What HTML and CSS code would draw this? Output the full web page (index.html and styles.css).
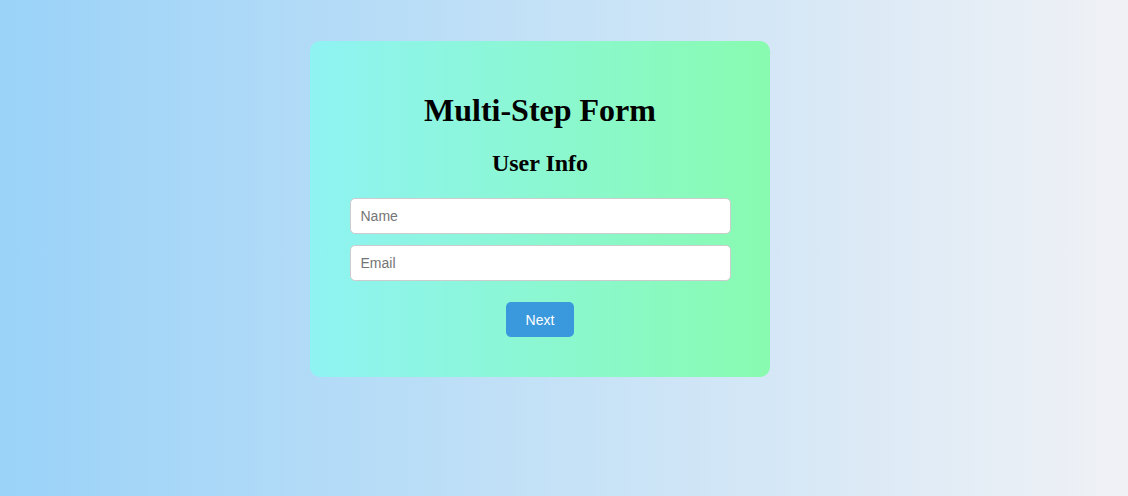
FILE: index.html
```html
<!DOCTYPE html>
<html lang="en">
<head>
<meta charset="utf-8">
<title>Multi-Step Form</title>
<link rel="stylesheet" href="styles.css">
</head>
<body>
  <div class="page">
    <div class="card">
      <h1 class="title">Multi-Step Form</h1>
      <div class="step">
        <h2 class="step-title">User Info</h2>
        <div class="fields">
          <input class="field" type="text" placeholder="Name">
          <input class="field" type="email" placeholder="Email">
        </div>
        <div class="actions">
          <button class="btn" type="button">Next</button>
        </div>
      </div>
    </div>
  </div>
</body>
</html>
```

FILE: styles.css
```css
html, body {
  margin: 0;
  padding: 0;
  height: 100%;
}

body {
  background: linear-gradient(to right, #9ad2f8, #f0f1f5);
  font-family: "Liberation Serif", "Times New Roman", serif;
}

.page {
  padding: 41px 0 0 310px;
}

.card {
  width: 400px;
  padding: 30px 30px 40px;
  border-radius: 10px;
  background: linear-gradient(to right, #8ff3f3, #88fbb0);
  text-align: center;
}

.title {
  font-size: 32px;
  font-weight: bold;
  margin: 21px 0;
  color: #000;
}

.step-title {
  font-size: 24px;
  font-weight: bold;
  margin: 20px 0 21px;
  color: #000;
}

.fields {
  display: flex;
  flex-direction: column;
  align-items: center;
  gap: 11px;
}

.field {
  box-sizing: border-box;
  width: 381px;
  height: 36px;
  padding: 0 10px;
  border: 1px solid #cccccc;
  border-radius: 5px;
  background: #fff;
  font-family: "Liberation Sans", Arial, sans-serif;
  font-size: 14px;
  color: #333;
  outline: none;
}

.field::placeholder {
  color: #757575;
}

.actions {
  display: flex;
  justify-content: center;
  margin-top: 21px;
}

.btn {
  box-sizing: border-box;
  height: 35px;
  padding: 0 20px;
  border: none;
  border-radius: 5px;
  background: #3a98dc;
  color: #fff;
  font-family: "Liberation Sans", Arial, sans-serif;
  font-size: 14px;
  cursor: pointer;
}
```
